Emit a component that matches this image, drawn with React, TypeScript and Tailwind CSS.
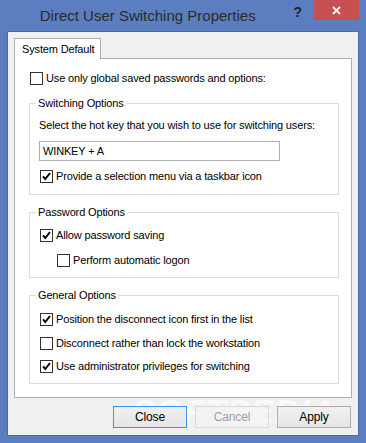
const uiFont = { fontFamily: '"Liberation Sans", Arial, sans-serif' };

function CheckBox({ checked }: { checked?: boolean }) {
  return (
    <span className="flex h-[13px] w-[13px] shrink-0 items-center justify-center border border-[#333333] bg-white">
      {checked && (
        <svg width="11" height="11" viewBox="0 0 11 11">
          <path d="M2 5.3 L4.3 8 L9 2" fill="none" stroke="#000" strokeWidth="2" />
        </svg>
      )}
    </span>
  );
}

function CheckRow({
  label,
  checked,
  className = "",
}: {
  label: string;
  checked?: boolean;
  className?: string;
}) {
  return (
    <label className={`flex h-[13px] items-center gap-[3px] ${className}`}>
      <CheckBox checked={checked} />
      <span className="whitespace-nowrap leading-[15px]">{label}</span>
    </label>
  );
}

function Group({
  title,
  className = "",
  children,
}: {
  title: string;
  className?: string;
  children: React.ReactNode;
}) {
  return (
    <fieldset className={`ml-[14px] w-[310px] border border-[#dcdcdc] ${className}`}>
      <legend className="ml-[6px] whitespace-nowrap px-[2px] leading-[15px]">{title}</legend>
      {children}
    </fieldset>
  );
}

export default function App() {
  return (
    <div
      className="flex h-[443px] w-[366px] flex-col bg-[#5a7ebf] text-[11px] tracking-[-0.15px] text-black"
      style={uiFont}
    >
      <div className="flex h-[31px] shrink-0 items-start tracking-normal">
        <div className="flex-1 pt-[6px] pl-[2px] text-center text-[15px] leading-[20px] text-[#2b2b2b]">
          Direct User Switching Properties
        </div>
        <div className="mr-[12px] pt-[4px] text-[14px] font-bold leading-[16px] text-[#222]">?</div>
        <button className="mr-[7px] flex h-[20px] w-[45px] items-center justify-center bg-[#c75050]">
          <svg width="9" height="9" viewBox="0 0 9 9">
            <path d="M1 1 L8 8 M8 1 L1 8" stroke="#fff" strokeWidth="1.8" />
          </svg>
        </button>
      </div>

      <div className="mx-[7px] flex h-[404px] flex-col border border-b-0 border-[#4b6ba6] bg-[#f0f0f0] px-[6px] pt-[6px]">
        <div className="relative z-10 -mb-px flex h-[21px] w-[87px] items-center whitespace-nowrap border border-b-0 border-[#adadad] bg-white pl-[7px]">
          System Default
        </div>
        <div className="flex h-[340px] flex-col border border-[#adadad] bg-white">
          <CheckRow label="Use only global saved passwords and options:" className="mt-[13px] ml-[15px]" />

          <Group title="Switching Options" className="mt-[11px] pb-[11px]">
            <div className="mt-[7px] whitespace-nowrap pl-[9px] leading-[15px]">
              Select the hot key that you wish to use for switching users:
            </div>
            <div className="mt-[8px] ml-[9px] flex h-[20px] w-[241px] items-center border border-[#abadb3] bg-white pl-[3px]">
              WINKEY + A
            </div>
            <CheckRow label="Provide a selection menu via a taskbar icon" checked className="mt-[9px] ml-[10px]" />
          </Group>

          <Group title="Password Options" className="mt-[10px] pb-[10px]">
            <CheckRow label="Allow password saving" checked className="mt-[9px] ml-[10px]" />
            <CheckRow label="Perform automatic logon" className="mt-[12px] ml-[27px]" />
          </Group>

          <Group title="General Options" className="mt-[10px] pb-[10px]">
            <CheckRow label="Position the disconnect icon first in the list" checked className="mt-[10px] ml-[10px]" />
            <CheckRow label="Disconnect rather than lock the workstation" className="mt-[11px] ml-[10px]" />
            <CheckRow label="Use administrator privileges for switching" checked className="mt-[10px] ml-[10px]" />
          </Group>
        </div>

        <div className="relative mt-[8px] flex justify-end gap-[8px] pr-px text-[12px]">
          <span className="pointer-events-none absolute right-[16px] -top-[14px] text-[34px] font-bold italic leading-[38px] tracking-[1px] text-white/70">
            SOFTPEDIA
          </span>
          <button className="relative h-[22px] w-[74px] border border-[#3399ff] bg-gradient-to-b from-[#f0f0f0] to-[#e5e5e5]">
            Close
          </button>
          <button
            disabled
            className="relative h-[22px] w-[74px] border border-[#d9d9d9] bg-[#f4f4f4]/80 text-[#a0a0a0]"
          >
            Cancel
          </button>
          <button className="relative h-[22px] w-[74px] border border-[#acacac] bg-gradient-to-b from-[#f0f0f0]/90 to-[#e5e5e5]/90">
            Apply
          </button>
        </div>
      </div>
      <div className="mx-[7px] h-px bg-[#4b6ba6]" />
    </div>
  );
}
